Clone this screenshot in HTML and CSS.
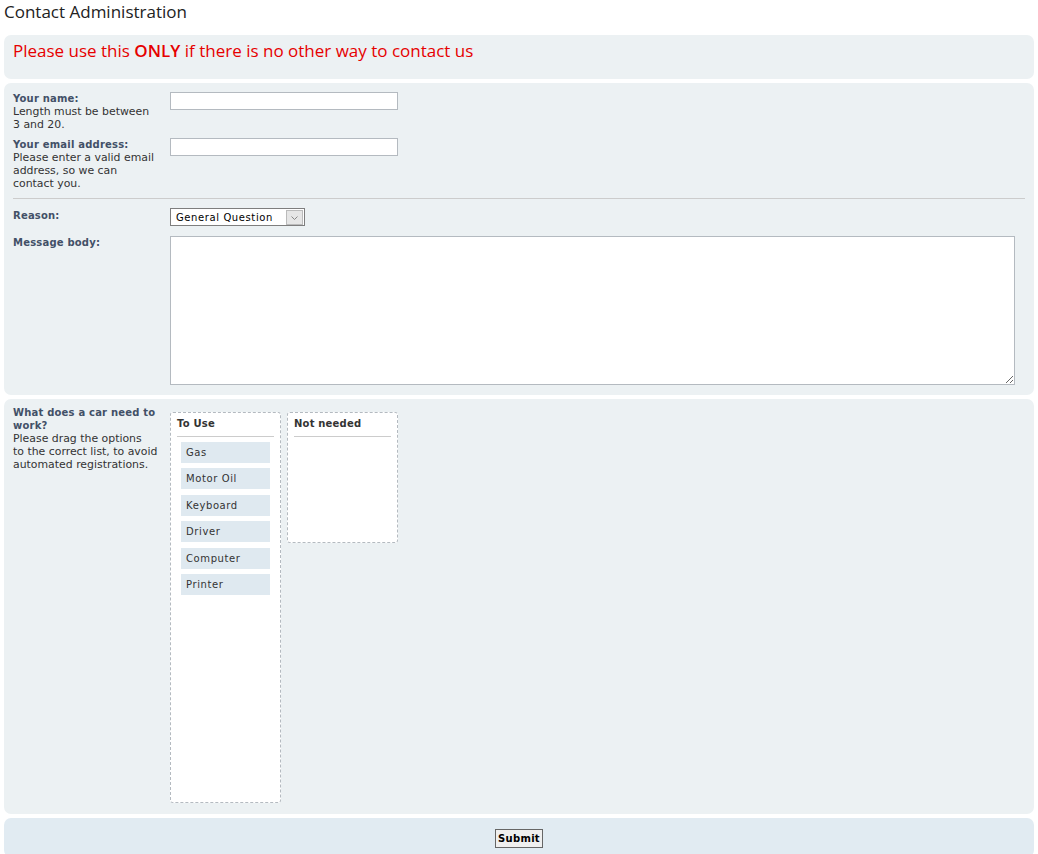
FILE: index.html
```html
<!DOCTYPE html>
<html lang="en">
<head>
    <meta charset="UTF-8">
    <title>Contact Administration</title>
    <link rel="stylesheet" href="styles.css">
</head>
<body>
    <h2 class="page-title">Contact Administration</h2>

    <form id="contactForm">
        <div class="panel">
            <h3 class="warning">Please use this <strong>ONLY</strong> if there is no other way to contact us</h3>
        </div>

        <div class="panel fields">
            <dl class="row">
                <dt><label for="name">Your name:</label><br><span>Length must be between 3 and 20.</span></dt>
                <dd><input type="text" id="name" class="inputbox"></dd>
            </dl>
            <dl class="row">
                <dt><label for="email">Your email address:</label><br><span>Please enter a valid email address, so we can contact you.</span></dt>
                <dd><input type="text" id="email" class="inputbox"></dd>
            </dl>
            <hr>
            <dl class="row reason">
                <dt><label for="reason">Reason:</label></dt>
                <dd>
                    <div class="select-wrap">
                        <select id="reason">
                            <option>General Question</option>
                            <option>Bug Report</option>
                            <option>Other</option>
                        </select>
                        <span class="select-arrow">
                            <svg width="9" height="6" viewBox="0 0 9 6"><path d="M1.5 1.5 L4.5 4.5 L7.5 1.5" fill="none" stroke="#888" stroke-width="1"/></svg>
                        </span>
                    </div>
                </dd>
            </dl>
            <dl class="row message">
                <dt><label for="message">Message body:</label></dt>
                <dd class="wide"><textarea id="message"></textarea></dd>
            </dl>
        </div>

        <div class="panel tall">
            <dl class="row">
                <dt><label>What does a car need to work?</label><br><span>Please drag the options<br>to the correct list, to avoid automated registrations.</span></dt>
                <dd class="lists">
                    <div class="sortable use">
                        <div class="sortable-head">To Use</div>
                        <ul>
                            <li>Gas</li>
                            <li>Motor Oil</li>
                            <li>Keyboard</li>
                            <li>Driver</li>
                            <li>Computer</li>
                            <li>Printer</li>
                        </ul>
                    </div>
                    <div class="sortable notneeded">
                        <div class="sortable-head">Not needed</div>
                        <ul></ul>
                    </div>
                </dd>
            </dl>
        </div>

        <div class="panel submit-bar">
            <button type="submit" class="button">Submit</button>
        </div>
    </form>
</body>
</html>
```

FILE: styles.css
```css
body {
    margin: 0;
    padding: 0 4px;
    background-color: #fff;
    font-family: "DejaVu Sans", Verdana, sans-serif;
    letter-spacing: 0.5px;
    color: #425067;
}

.page-title {
    font-family: "Open Sans", "Trebuchet MS", sans-serif;
    font-weight: normal;
    font-size: 17px;
    letter-spacing: 0;
    color: #222;
    margin: 0;
    height: 35px;
    line-height: 24px;
}

.panel {
    background-color: #ecf1f3;
    border-radius: 7px;
    padding: 9px 9px;
    margin-bottom: 4px;
}

.warning {
    font-family: "Open Sans", "Trebuchet MS", sans-serif;
    font-weight: normal;
    font-size: 17px;
    letter-spacing: 0;
    color: #e60000;
    margin: 0;
    height: 26px;
    line-height: 14px;
}

.warning strong {
    font-weight: 600;
}

.row {
    display: flex;
    margin: 0 0 7px 0;
    font-size: 10px;
    line-height: 13px;
}

.row dt {
    width: 146px;
    margin-right: 11px;
    flex-shrink: 0;
}

.row dt label {
    font-weight: bold;
    letter-spacing: 0.2px;
}

.row dt span {
    color: #333;
    font-size: 10.9px;
    letter-spacing: 0;
}

.row dd {
    margin: 0;
}

.row dd.wide {
    flex: 1;
    padding-right: 10px;
}

.inputbox {
    width: 228px;
    height: 18px;
    box-sizing: border-box;
    border: 1px solid #b4bac0;
    background: #fff;
    padding: 0 3px;
    font-size: 11px;
}

hr {
    border: none;
    border-top: 1px solid #ccc;
    margin: 8px 0 9px 0;
}

.row.reason {
    margin-bottom: 10px;
}

.row.reason dt {
    padding-top: 1px;
}

.select-wrap {
    display: inline-flex;
    border: 1px solid #7e7e7e;
    background: #fff;
    height: 18px;
    box-sizing: border-box;
}

.select-wrap select {
    appearance: none;
    -webkit-appearance: none;
    border: none;
    background: transparent;
    font-family: "DejaVu Sans", Verdana, sans-serif;
    font-size: 10px;
    letter-spacing: 0.6px;
    color: #000;
    padding: 0 0 0 5px;
    width: 115px;
    height: 16px;
    outline: none;
}

.select-arrow {
    display: flex;
    align-items: center;
    justify-content: center;
    width: 17px;
    height: 15px;
    margin: 1px 1px 0 0;
    background: #e6e6e6;
    border: 1px solid #bbb;
    box-sizing: border-box;
}

.row.message {
    margin-bottom: 0;
}

textarea {
    display: block;
    width: 100%;
    height: 149px;
    box-sizing: border-box;
    border: 1px solid #b4bac0;
    background: #fff;
}

.panel.fields {
    padding-bottom: 10px;
}

.panel.tall {
    padding-top: 7px;
    padding-bottom: 4px;
}

.lists {
    display: flex;
    align-items: flex-start;
    gap: 6px;
    padding-top: 6px;
}

.sortable {
    width: 111px;
    box-sizing: border-box;
    background: #fff;
    border: 1px dashed #b4bac0;
    border-radius: 3px;
    padding: 4px 6px 0 6px;
}

.sortable.use {
    height: 391px;
}

.sortable.notneeded {
    height: 131px;
}

.sortable-head {
    font-size: 10px;
    font-weight: bold;
    letter-spacing: 0.2px;
    color: #333;
    padding-bottom: 6px;
    border-bottom: 1px solid #ccc;
}

.sortable ul {
    list-style: none;
    margin: 5px 0 0 0;
    padding: 0 4px;
}

.sortable li {
    background: #dfe9f0;
    color: #333;
    font-size: 10px;
    letter-spacing: 0.6px;
    height: 21px;
    line-height: 21px;
    padding: 0 5px;
    margin-bottom: 5.4px;
}

.submit-bar {
    background-color: #e1ebf2;
    text-align: center;
    padding: 9px;
}

.button {
    font-family: "DejaVu Sans", Verdana, sans-serif;
    font-size: 10px;
    font-weight: bold;
    letter-spacing: 0.3px;
    color: #000;
    background: #efefef;
    border: 1px solid #666;
    height: 19px;
    padding: 0 2px;
    cursor: pointer;
}
```
